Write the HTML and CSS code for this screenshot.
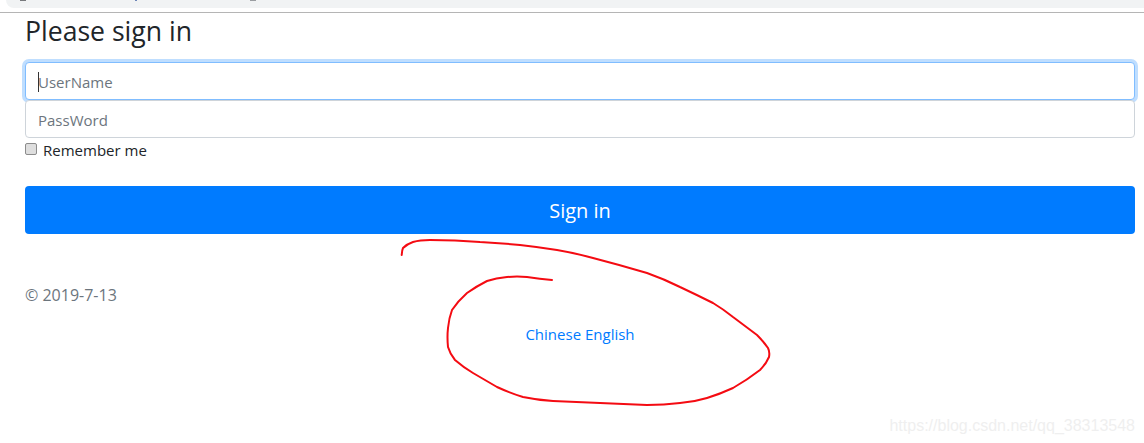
FILE: index.html
```html
<!DOCTYPE html>
<html lang="en">
<head>
    <meta charset="UTF-8">
    <meta name="viewport" content="width=device-width, initial-scale=1.0">
    <title>Please sign in</title>
    <link rel="stylesheet" href="styles.css">
</head>
<body>
    <!-- browser address bar, mostly cropped -->
    <div class="topbar">
        <div class="address">
            <span class="bit bit-icon"></span>
            <span class="bit bit-slash"></span>
            <span class="bit bit-under"></span>
        </div>
    </div>

    <div class="container">
        <h3>Please sign in</h3>
        <form action="#" method="POST">
            <div class="focus-wrap">
                <input class="field field-focus" type="text" placeholder="UserName">
                <span class="caret"></span>
            </div>
            <input class="field field-over" type="password" placeholder="PassWord">
            <label class="remember"><input type="checkbox"> Remember me</label>
            <button type="submit">Sign in</button>
        </form>
        <p class="copy">&copy; 2019-7-13</p>
        <p class="langs"><a href="#">Chinese</a> <a href="#">English</a></p>
    </div>

    <!-- red pen annotation drawn over the page -->
    <svg class="scribble" width="1144" height="443" viewBox="0 0 1144 443">
        <path d="M401.7 255 Q402 250 403 248 Q407 244 413 242 Q420 240 430 240 Q455 240 480 242 Q500 243 520 245 Q538 247 557 250 Q575 253 593 258 Q620 265 647 273 Q664 279 680 287 Q697 295 713 303 Q723 309 733 317 Q745 326 757 335 Q763 341 768 348 Q770 352 769 357 Q766 364 760 370 Q747 380 733 388 Q720 394 707 398 Q694 402 680 403 Q664 405 647 405 Q624 404 600 403 Q576 402 553 401 Q537 400 523 397 Q510 393 497 387 Q485 380 473 373 Q463 367 455 360 Q450 354 448 347 Q447 337 448 328 Q449 318 452 310 Q458 301 467 293 Q477 286 487 281 Q496 278 507 277 Q517 276 527 277 Q540 279 552 280"/>
    </svg>

    <div class="watermark">https://blog.csdn.net/qq_38313548</div>
</body>
</html>
```

FILE: styles.css
```css
* {
    box-sizing: border-box;
}
body {
    margin: 0;
    font-family: "Open Sans", Arial, sans-serif;
    font-size: 15px;
    color: #212529;
    background-color: #fff;
}
.topbar {
    height: 13px;
    padding-left: 6px;
    border-bottom: 1px solid #b5b5b5;
}
.address {
    display: flex;
    height: 8px;
    background-color: #f1f3f4;
    border-radius: 0 0 0 10px;
}
.bit {
    height: 1px;
    background-color: #77797c;
}
.bit-icon {
    width: 6px;
    margin-left: 14px;
}
.bit-slash {
    width: 2px;
    margin-left: 109px;
    background-color: #6d86b8;
}
.bit-under {
    width: 6px;
    margin-left: 113px;
    background-color: #9a9da1;
}
.container {
    margin-left: 25px;
    width: 1110px;
}
h3 {
    margin: 0;
    height: 49px;
    font-size: 26.6px;
    font-weight: 400;
    line-height: 37px;
}
.focus-wrap {
    position: relative;
}
.field {
    display: block;
    width: 100%;
    height: 38px;
    padding: 7px 12px 5px;
    font: inherit;
    background-color: #fff;
    border: 1px solid #ced4da;
    border-radius: 4px;
    outline: none;
}
.field::placeholder {
    color: #6c757d;
}
.field-focus {
    border-color: #80bdff;
    box-shadow: 0 0 0 3px #bfdeff;
}
.field-over {
    position: relative;
}
.caret {
    position: absolute;
    left: 13px;
    top: 10px;
    width: 1px;
    height: 20px;
    background-color: #333;
}
.remember {
    display: flex;
    align-items: center;
    height: 24px;
    margin-bottom: 24px;
    gap: 6px;
}
.remember input {
    appearance: none;
    width: 12px;
    height: 12px;
    margin: 0 0 2px;
    background-color: #dedede;
    border: 1px solid #8c8c8c;
    border-radius: 2px;
}
button {
    display: block;
    width: 100%;
    height: 48px;
    font: inherit;
    font-size: 20px;
    color: #fff;
    background-color: #007bff;
    border: none;
    border-radius: 4px;
    cursor: pointer;
}
.copy {
    margin: 51px 0 0;
    font-size: 16px;
    line-height: 20px;
    color: #6c757d;
}
.langs {
    margin: 19px 0 0;
    line-height: 20px;
    text-align: center;
}
.langs a {
    color: #007bff;
    text-decoration: none;
}
.scribble {
    position: absolute;
    left: 0;
    top: 0;
    pointer-events: none;
}
.scribble path {
    fill: none;
    stroke: #f40b12;
    stroke-width: 2;
    stroke-linecap: round;
    stroke-linejoin: round;
}
.watermark {
    position: absolute;
    right: 9px;
    top: 417px;
    font-family: "Liberation Sans", Arial, sans-serif;
    font-size: 16px;
    color: #efefef;
}
```
